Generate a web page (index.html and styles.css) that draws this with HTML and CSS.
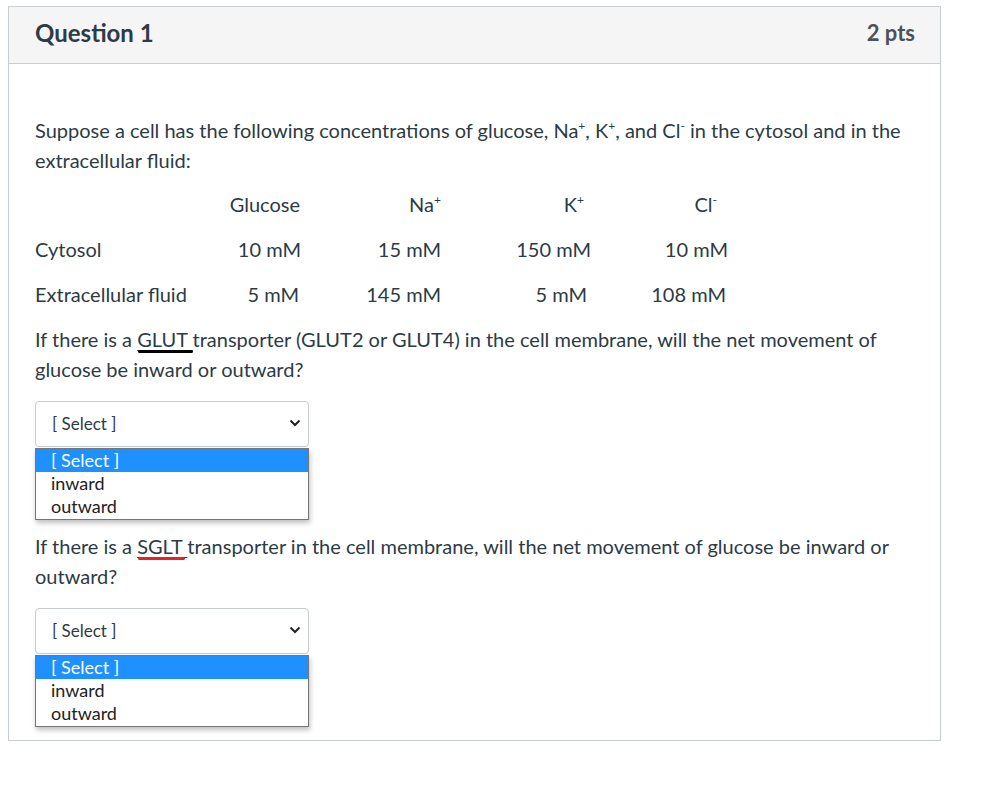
FILE: index.html
```
<!DOCTYPE html>
<html>
<head>
<meta charset="utf-8">
<link rel="stylesheet" href="styles.css">
</head>
<body>
<div class="question">
  <div class="q-header">
    <span class="q-title">Question 1</span>
    <span class="q-pts">2 pts</span>
  </div>
  <div class="q-body">
    <p class="para">Suppose a cell has the following concentrations of glucose, Na<sup>+</sup>, K<sup>+</sup>, and Cl<sup>-</sup> in the cytosol and in the extracellular fluid:</p>
    <div class="conc">
      <div class="row">
        <span class="c0"></span>
        <span class="c1 h1">Glucose</span>
        <span class="c2">Na<sup>+</sup></span>
        <span class="c3 h3">K<sup>+</sup></span>
        <span class="c4 h4">Cl<sup>-</sup></span>
      </div>
      <div class="row">
        <span class="c0">Cytosol</span>
        <span class="c1">10 mM</span>
        <span class="c2">15 mM</span>
        <span class="c3">150 mM</span>
        <span class="c4">10 mM</span>
      </div>
      <div class="row">
        <span class="c0">Extracellular fluid</span>
        <span class="c1 v1">5 mM</span>
        <span class="c2">145 mM</span>
        <span class="c3 v3">5 mM</span>
        <span class="c4 v4">108 mM</span>
      </div>
    </div>
    <p class="para p1">If there is a <span class="mark mark-black">GLUT </span>transporter (GLUT2 or GLUT4) in the cell membrane, will the net movement of glucose be inward or outward?</p>
    <div class="dropdown">
      <div class="select"><span>[ Select ]</span>
        <svg class="chev" width="12" height="8" viewBox="0 0 12 8"><path d="M1.5 1.5 L6 6 L10.5 1.5" fill="none" stroke="#222" stroke-width="2"/></svg>
      </div>
      <div class="options">
        <div class="opt active">[ Select ]</div>
        <div class="opt">inward</div>
        <div class="opt">outward</div>
      </div>
    </div>
    <p class="para p2">If there is a <span class="mark mark-red">SGLT </span>transporter in the cell membrane, will the net movement of glucose be inward or outward?</p>
    <div class="dropdown d2">
      <div class="select"><span>[ Select ]</span>
        <svg class="chev" width="12" height="8" viewBox="0 0 12 8"><path d="M1.5 1.5 L6 6 L10.5 1.5" fill="none" stroke="#222" stroke-width="2"/></svg>
      </div>
      <div class="options">
        <div class="opt active">[ Select ]</div>
        <div class="opt">inward</div>
        <div class="opt">outward</div>
      </div>
    </div>
  </div>
</div>
</body>
</html>
```
FILE: styles.css
```
html, body { background: #fff; }
body {
  margin: 6px 0 0 8px;
  font-family: Lato, "Open Sans", sans-serif;
  color: #2d3b45;
}
.question {
  width: 933px;
  box-sizing: border-box;
  border: 1px solid #c7cdd1;
}
.q-header {
  box-sizing: border-box;
  display: flex;
  justify-content: space-between;
  align-items: center;
  height: 57px;
  padding: 0 25px 6px 26px;
  background: #f5f5f5;
  border-bottom: 1px solid #c7cdd1;
  font-weight: 700;
  font-size: 24px;
  color: #2d3b45;
}
.q-pts { font-size: 22px; color: #4b5258; }
.q-body {
  padding: 51px 26px 13px 26px;
  font-size: 20px;
}
.para {
  margin: 0;
  line-height: 30px;
}
sup { font-size: 12px; line-height: 0; vertical-align: 8px; }
.conc { margin-top: 6px; }
.row {
  display: grid;
  grid-template-columns: 166px 100px 140px 150px 137px;
  height: 45px;
  align-items: center;
}
.c1, .c2, .c3, .c4 { text-align: right; }
.h1 { padding-right: 1px; }
.h3 { padding-right: 7px; }
.h4 { padding-right: 11px; }
.v1 { padding-right: 2px; }
.v3 { padding-right: 4px; }
.v4 { padding-right: 2px; }
.p1 { margin-top: 8px; }
.mark {
  position: relative;
  text-decoration: underline;
  text-decoration-thickness: 1px;
  text-underline-offset: 3px;
}
.mark::after {
  content: "";
  position: absolute;
  left: 1px;
  right: 0;
  bottom: -2px;
  height: 3px;
  border-radius: 2px;
}
.mark-black::after { background: #000; }
.mark-red::after { background: #e8202a; right: 2px; }
.dropdown {
  width: 274px;
  margin-top: 17px;
}
.d2 { margin-top: 17px; }
.select {
  box-sizing: border-box;
  height: 46px;
  border: 1px solid #c7cdd1;
  border-radius: 4px;
  display: flex;
  align-items: center;
  justify-content: space-between;
  padding: 0 7px 2px 16px;
  font-size: 17px;
  color: #2d3b45;
}
.options {
  margin-top: 1px;
  border: 1px solid #767676;
  box-shadow: 1px 3px 5px rgba(0,0,0,0.25);
  background: #fff;
  padding: 0 0 1px 0;
}
.opt {
  font-size: 18px;
  line-height: 23px;
  padding-left: 15px;
  color: #222;
}
.opt.active {
  background: #1e90ff;
  color: #fff;
}
.p2 { margin-top: 11px; }
```
